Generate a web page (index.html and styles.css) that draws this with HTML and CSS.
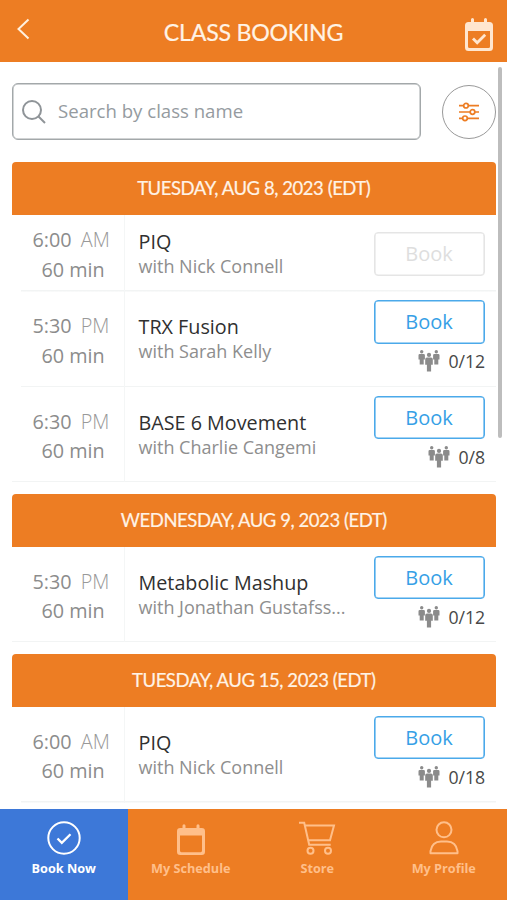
FILE: index.html
```html
<!DOCTYPE html>
<html lang="en">
<head>
<meta charset="utf-8">
<title>Class Booking</title>
<link rel="stylesheet" href="styles.css">
</head>
<body>
<svg class="defs" width="0" height="0">
  <symbol id="people" viewBox="0 0 22 22">
    <g fill="#8b8b8b">
      <circle cx="3.7" cy="1.8" r="1.7"/><path d="M1.8 4h3.8q1.300 0 1.300 1.300v4.200H5.700V14.500H1.700V9.500H.5V5.300Q.5 4 1.800 4z"/>
      <circle cx="18.300" cy="1.800" r="1.700"/><path d="M16.400 4h3.800q1.300 0 1.300 1.300v4.200h-1.200v5h-4v-5h-1.200V5.300q0-1.300 1.300-1.300z"/>
      <circle cx="11" cy="4.900" r="2.100"/><path d="M9 7.500h4q1.800 0 1.800 1.800v5.500h-1.700v6.700H8.900v-6.700H7.200V9.300Q7.200 7.500 9 7.500z"/>
    </g>
  </symbol>
</svg>
<div class="app">
  <header class="topbar">
    <svg class="back" width="16" height="24" viewBox="0 0 16 24"><path d="M13.500 2.500 3.500 12l10 9.500" fill="none" stroke="#fff0df" stroke-width="2"/></svg>
    <h1>CLASS BOOKING</h1>
    <svg class="cal" width="30" height="34" viewBox="0 0 30 34"><path fill="#ffe6cf" fill-rule="evenodd" d="M7 1.500a1.500 1.500 0 0 1 3 0V4h10V1.500a1.500 1.500 0 0 1 3 0V4h2.500Q29 4 29 7.500v22q0 3.500-3.500 3.500h-21Q1 33 1 29.500v-22Q1 4 4.500 4H7zM4 13v15.500Q4 30 5.500 30h19q1.500 0 1.500-1.500V13z"/><path d="m9 20.500 4.200 4.300 8-8" fill="none" stroke="#ffe6cf" stroke-width="2.800"/></svg>
  </header>
  <main class="content">
    <div class="search-row">
      <div class="search">
        <svg width="24" height="24" viewBox="0 0 24 24"><g fill="none" stroke="#8f9498" stroke-width="2"><circle cx="10" cy="10" r="9"/><path d="m16.500 16.500 6.500 6.500"/></g></svg>
        <span>Search by class name</span>
      </div>
      <div class="filter">
        <svg width="22" height="20" viewBox="0 0 22 20"><g fill="#fff" stroke="#ed7d23" stroke-width="1.700"><path d="M1 3.700h20M1 10h20M1 16.300h20"/><circle cx="8" cy="3.700" r="2.300"/><circle cx="14.500" cy="10" r="2.300"/><circle cx="7" cy="16.300" r="2.300"/></g></svg>
      </div>
    </div>

    <section class="day">
      <h2>TUESDAY, AUG 8, 2023 (EDT)</h2>
      <article class="row short">
        <div class="time"><p>6:00 <i>AM</i></p><p>60 min</p></div>
        <div class="info"><h3>PIQ</h3><p>with Nick Connell</p></div>
        <div class="action"><button class="off">Book</button></div>
      </article>
      <article class="row">
        <div class="time"><p>5:30 <i>PM</i></p><p>60 min</p></div>
        <div class="info"><h3>TRX Fusion</h3><p>with Sarah Kelly</p></div>
        <div class="action"><button>Book</button><div class="count"><svg width="22" height="22"><use href="#people"/></svg>0/12</div></div>
      </article>
      <article class="row last">
        <div class="time"><p>6:30 <i>PM</i></p><p>60 min</p></div>
        <div class="info"><h3>BASE 6 Movement</h3><p>with Charlie Cangemi</p></div>
        <div class="action"><button>Book</button><div class="count"><svg width="22" height="22"><use href="#people"/></svg>0/8</div></div>
      </article>
    </section>

    <section class="day">
      <h2>WEDNESDAY, AUG 9, 2023 (EDT)</h2>
      <article class="row last">
        <div class="time"><p>5:30 <i>PM</i></p><p>60 min</p></div>
        <div class="info"><h3>Metabolic Mashup</h3><p>with Jonathan Gustafss...</p></div>
        <div class="action"><button>Book</button><div class="count"><svg width="22" height="22"><use href="#people"/></svg>0/12</div></div>
      </article>
    </section>

    <section class="day">
      <h2>TUESDAY, AUG 15, 2023 (EDT)</h2>
      <article class="row">
        <div class="time"><p>6:00 <i>AM</i></p><p>60 min</p></div>
        <div class="info"><h3>PIQ</h3><p>with Nick Connell</p></div>
        <div class="action"><button>Book</button><div class="count"><svg width="22" height="22"><use href="#people"/></svg>0/18</div></div>
      </article>
    </section>
    <div class="scrollbar"></div>
  </main>
  <nav class="tabs">
    <a class="tab active">
      <svg width="36" height="36" viewBox="0 0 36 36"><g fill="none" stroke="currentColor" stroke-width="2"><circle cx="18" cy="18" r="15.700"/><path d="m11.500 18.500 4.300 4.300 8.700-8.600" stroke-width="2.300"/></g></svg>
      <span>Book Now</span>
    </a>
    <a class="tab">
      <svg width="36" height="36" viewBox="0 0 36 36"><path fill="currentColor" fill-rule="evenodd" d="M9.500 5.800a1.500 1.500 0 0 1 3 0V8h11V5.800a1.500 1.500 0 0 1 3 0V8h2.200Q32 8 32 11.300v20.400q0 3.300-3.300 3.300H7.300Q4 35 4 31.700V11.300Q4 8 7.300 8h2.200zM7 15.500v15.300q0 1.400 1.400 1.400h19.200q1.400 0 1.400-1.400V15.500z"/></svg>
      <span>My Schedule</span>
    </a>
    <a class="tab">
      <svg width="38" height="36" viewBox="0 0 38 36"><g fill="none" stroke="currentColor" stroke-width="2"><path d="M1 2.700h5.200l5 22.100h21.500M7 5.500h29l-4 14.700H10"/><circle cx="12.500" cy="30.700" r="3"/><circle cx="30" cy="30.700" r="3"/></g></svg>
      <span>Store</span>
    </a>
    <a class="tab">
      <svg width="36" height="36" viewBox="0 0 36 36"><g fill="none" stroke="currentColor" stroke-width="2"><circle cx="18" cy="9.800" r="7.500"/><path d="M4.500 33.200v-2Q6 21.500 15 21.500h6q9 0 10.500 9.700v2z" stroke-linejoin="round"/></g></svg>
      <span>My Profile</span>
    </a>
  </nav>
</div>
</body>
</html>
```
FILE: styles.css
```css
* { box-sizing: border-box; margin: 0; padding: 0; }
body { width: 507px; height: 900px; overflow: hidden; background: #fff; font-family: "Open Sans", sans-serif; }
.defs { display: block; }
svg { display: block; flex: none; }
.app { height: 900px; display: flex; flex-direction: column; }
.topbar { height: 61.500px; flex: none; background: #ed7d23; display: grid; grid-template-columns: 60px 1fr 60px; padding: 0 13px 0 15px; align-items: center; }
.topbar h1 { font: 400 23.200px/30px Lato, sans-serif; color: #fff3e6; text-align: center; padding: 2px 2px 0 0; letter-spacing: -.27px; white-space: nowrap; -webkit-text-stroke: .2px #fff3e6; }
.back { margin-bottom: 4px; }
.cal { justify-self: end; margin-top: 8px; }
.content { flex: 1; min-height: 0; position: relative; padding: 21.500px 11.500px 0 12px; overflow: hidden; }
.search-row { display: flex; justify-content: space-between; align-items: center; height: 57px; margin-bottom: 21.500px; }
.search { width: 409px; height: 57px; border: 1px solid #a3a8aa; box-shadow: inset 0 0 0 .5px #a3a8aa; border-radius: 6px; display: flex; align-items: center; gap: 12px; padding-left: 9px; color: #959b9f; font-size: 18.600px; }
.search span { padding-bottom: 2px; }
.filter { width: 54px; height: 54px; border: 1px solid #999; border-radius: 50%; display: grid; place-items: center; }
.day { margin-bottom: 11.500px; }
.day h2 { height: 53.500px; background: #ed7d23; border-radius: 4px 4px 0 0; font: 400 18.500px/53.500px Lato, sans-serif; letter-spacing: -.45px; color: #fff3e6; text-align: center; -webkit-text-stroke: .2px #fff3e6; }
.row { height: 95.500px; display: grid; grid-template-columns: 113px 1fr 122px; background: linear-gradient(#f2f4f4, #f2f4f4) 9px 100% / 100% 1.500px no-repeat; }
.row.short { height: 76.500px; }
.row.last { height: 95px; background-position: 0 100%; }
.time { border-right: 1px solid #f4f6f6; display: flex; flex-direction: column; justify-content: center; font-size: 19.800px; line-height: 29.500px; color: #8c8c8c; padding-top: 3px; }
.time p { padding-left: 20.500px; white-space: nowrap; }
.time p + p { padding-left: 29.500px; }
.time i { font-style: normal; font-weight: 300; color: #999; margin-left: 4px; }
.info { padding: 0 0 0 13.500px; display: flex; flex-direction: column; justify-content: center; white-space: nowrap; }
.short .info { padding-top: 2px; }
.info h3 { font-size: 19.750px; line-height: 25px; font-weight: 400; color: #303030; }
.info p { font-size: 18px; line-height: 25px; color: #8e8e8e; }
.action { padding-top: 8.500px; padding-right: 10.500px; }
.short .action { padding-top: 17px; }
button { display: block; width: 111px; height: 43.500px; background: #fff; border: 1px solid #4ba9ea; box-shadow: inset 0 0 0 .6px #4ba9ea; border-radius: 4px; font: 400 20px/41px "Open Sans", sans-serif; color: #36a0e6; }
button.off { border-color: #e5e5e5; box-shadow: inset 0 0 0 .6px #e5e5e5; color: #dedede; }
.count { display: flex; justify-content: flex-end; align-items: center; gap: 9px; height: 22px; margin-top: 6.500px; font-size: 17.700px; letter-spacing: -.1px; color: #484848; }
.scrollbar { position: absolute; right: 5px; top: 5px; width: 4px; height: 371px; background: #bdbdbd; border-radius: 2px; }
.tabs { flex: none; height: 91px; display: grid; grid-template-columns: 127.500px repeat(3, 126.500px); background: #ed7d23; }
.tab { display: flex; flex-direction: column; align-items: center; padding-top: 11px; color: #ffbf8a; font: 700 12.700px/20px "Open Sans", sans-serif; }
.tab span { margin-top: 2px; }
.tab.active { background: #3d78d8; color: #fff; }
```
